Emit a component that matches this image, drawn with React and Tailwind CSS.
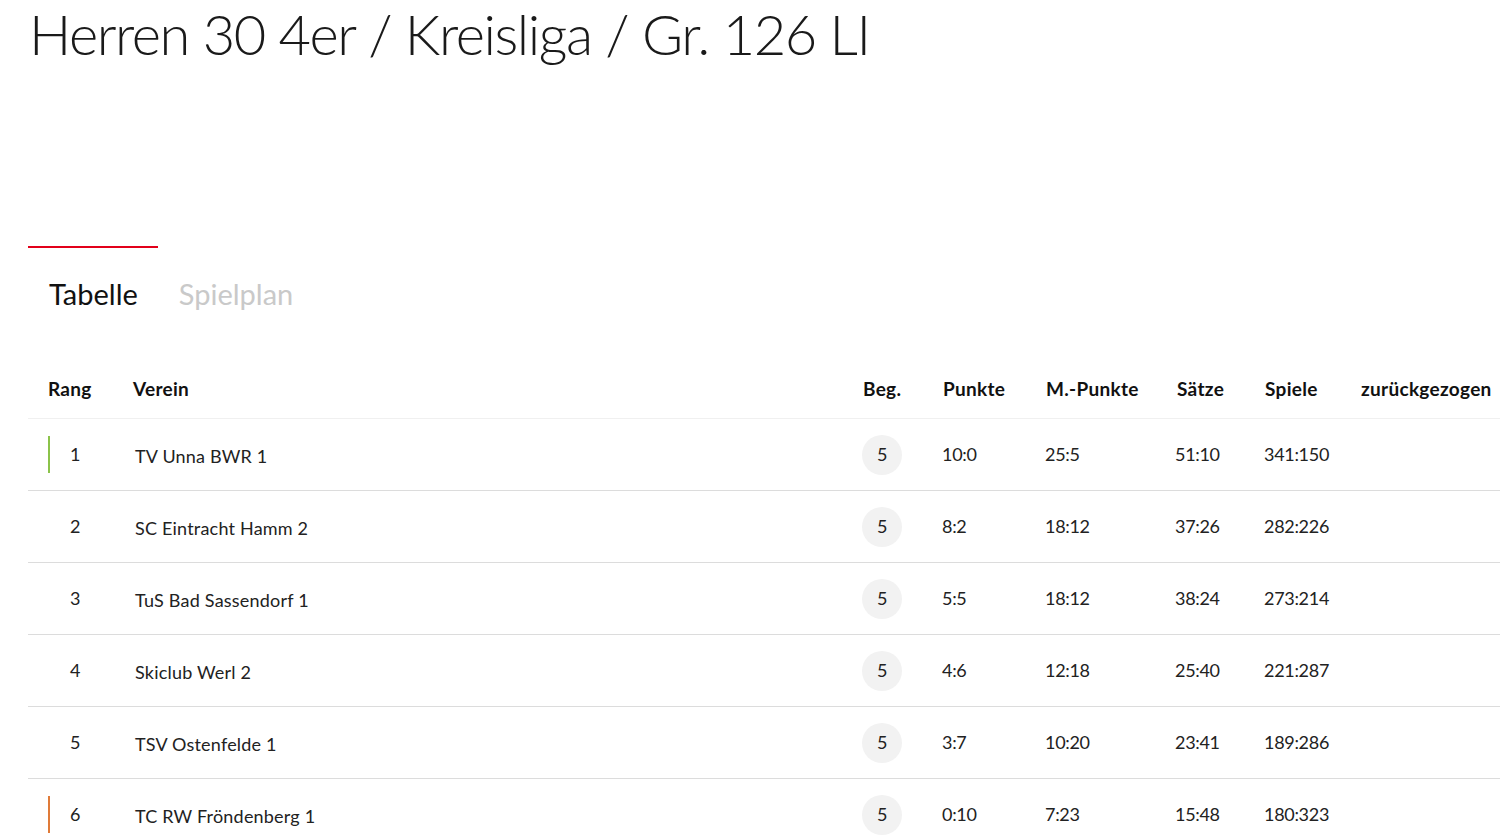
import React from "react";

const rows = [
  { r: 1, name: "TV Unna BWR 1", p: "10:0", mp: "25:5", s: "51:10", sp: "341:150", bar: "bg-[#8bc34a]" },
  { r: 2, name: "SC Eintracht Hamm 2", p: "8:2", mp: "18:12", s: "37:26", sp: "282:226" },
  { r: 3, name: "TuS Bad Sassendorf 1", p: "5:5", mp: "18:12", s: "38:24", sp: "273:214" },
  { r: 4, name: "Skiclub Werl 2", p: "4:6", mp: "12:18", s: "25:40", sp: "221:287" },
  { r: 5, name: "TSV Ostenfelde 1", p: "3:7", mp: "10:20", s: "23:41", sp: "189:286" },
  { r: 6, name: "TC RW Fröndenberg 1", p: "0:10", mp: "7:23", s: "15:48", sp: "180:323", bar: "bg-[#e07b39]" },
];

const cols = "grid grid-cols-[85px_730px_80px_103px_131px_88px_96px_171px]";

export default function App() {
  return (
    <div className="w-[1500px] h-[837px] overflow-hidden bg-white text-[#1a1a1a] font-['Source_Sans_Pro','Lato',sans-serif]">
      <h1 className="pl-[29px] pt-[2px] text-[56px] font-light leading-[64px] tracking-[-1.45px]">
        Herren 30 4er / Kreisliga / Gr. 126 LI
      </h1>
      <div className="ml-[28px] mt-[180px] w-[130px] h-[2px] bg-[#e2001a]" />
      <div className="ml-[28px] mt-[26px] flex text-[29px] leading-[40px]">
        <div className="px-[21px] text-[#111]">Tabelle</div>
        <div className="px-[20px] text-[#c9c9c9]">Spielplan</div>
      </div>
      <div className="ml-[28px] mt-[52px] w-[1484px]">
        <div className={`${cols} h-[53px] items-center pb-[6px] border-b border-[#f0f0f0] text-[19px] tracking-[0.3px] font-bold text-[#111]`}>
          <div className="pl-[20px]">Rang</div>
          <div className="pl-[20px]">Verein</div>
          <div className="pl-[20px]">Beg.</div>
          <div className="pl-[20px]">Punkte</div>
          <div className="pl-[20px]">M.-Punkte</div>
          <div className="pl-[20px]">Sätze</div>
          <div className="pl-[20px]">Spiele</div>
          <div className="pl-[20px]">zurückgezogen</div>
        </div>
        {rows.map((row) => (
          <div key={row.r} className={`${cols} h-[72px] items-center border-b border-[#dcdcdc] text-[18px] tracking-[-0.3px] text-[#222]`}>
            <div className="pl-[20px] flex items-center">
              <div className={`w-[2px] h-[37px] ${row.bar || "bg-transparent"}`} />
              <div className="w-[20px] ml-[15px] text-center">{row.r}</div>
            </div>
            <div className="pl-[22px] pt-[3px] tracking-[0.2px]">{row.name}</div>
            <div className="pl-[19px]">
              <div className="w-[40px] h-[40px] rounded-full bg-[#f2f2f2] flex items-center justify-center">5</div>
            </div>
            <div className="pl-[19px]">{row.p}</div>
            <div className="pl-[19px]">{row.mp}</div>
            <div className="pl-[18px]">{row.s}</div>
            <div className="pl-[19px]">{row.sp}</div>
            <div />
          </div>
        ))}
      </div>
    </div>
  );
}
